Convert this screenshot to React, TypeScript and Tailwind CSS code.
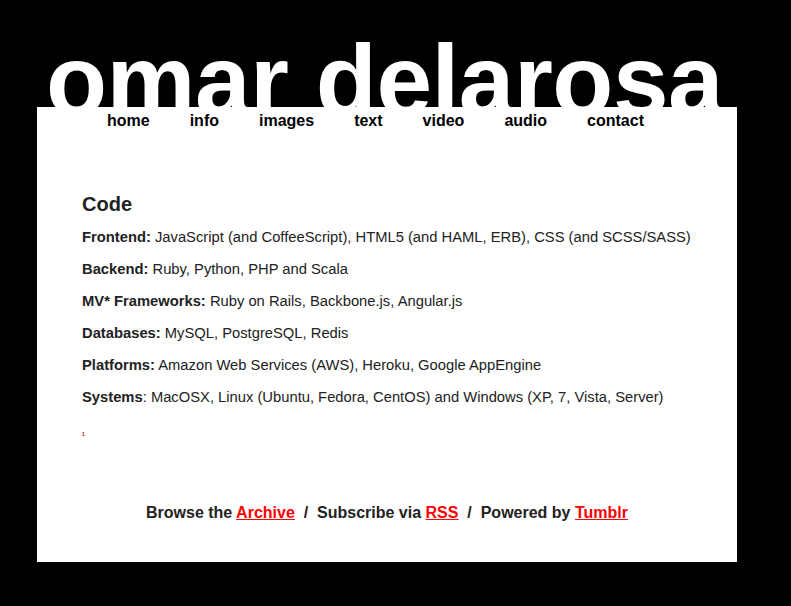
const navItems = ["home", "info", "images", "text", "video", "audio", "contact"];

const skills: { label: string; rest: string }[] = [
	{ label: "Frontend:", rest: " JavaScript (and CoffeeScript), HTML5 (and HAML, ERB), CSS (and SCSS/SASS)" },
	{ label: "Backend:", rest: " Ruby, Python, PHP and Scala" },
	{ label: "MV* Frameworks:", rest: " Ruby on Rails, Backbone.js, Angular.js" },
	{ label: "Databases:", rest: " MySQL, PostgreSQL, Redis" },
	{ label: "Platforms:", rest: " Amazon Web Services (AWS), Heroku, Google AppEngine" },
	{ label: "Systems", rest: ": MacOSX, Linux (Ubuntu, Fedora, CentOS) and Windows (XP, 7, Vista, Server)" },
];

const App: React.FC = () => {
	return (
		<div className="min-h-[606px] bg-black font-['Liberation_Sans',Arial,sans-serif] text-[#222]">
			<div className="ml-[37px] w-[700px]">
				<div className="h-[107px] overflow-hidden pt-[30px]">
					<h1 className="ml-[9px] text-[100px] font-bold leading-[100px] text-white tracking-[-0.5px]">
						omar delarosa
					</h1>
				</div>
				<div className="h-[455px] bg-white">
					<nav className="flex h-[28px] items-center gap-[40px] pl-[70px] text-[16px] font-bold text-black">
						{navItems.map((item) => (
							<span key={item}>{item}</span>
						))}
					</nav>
					<div className="pl-[45px] pr-[10px]">
						<h2 className="mt-[57px] text-[20px] font-bold leading-[24px]">Code</h2>
						<div className="mt-[12px]">
							{skills.map((s) => (
								<p key={s.label} className="mb-[14px] text-[14.75px] leading-[18px]">
									<b>{s.label}</b>
									{s.rest}
								</p>
							))}
						</div>
						<div className="mt-[25px] text-[5px] leading-[6px] font-bold text-red-600">1</div>
					</div>
					<p className="mt-[66px] text-center text-[16px] font-bold leading-[20px]">
						Browse the{" "}
						<a className="text-[#f00] underline">Archive</a>
						{"\u00a0 /\u00a0 "}Subscribe via{" "}
						<a className="text-[#f00] underline">RSS</a>
						{"\u00a0 /\u00a0 "}Powered by{" "}
						<a className="text-[#f00] underline">Tumblr</a>
					</p>
				</div>
			</div>
		</div>
	);
};

export default App;
